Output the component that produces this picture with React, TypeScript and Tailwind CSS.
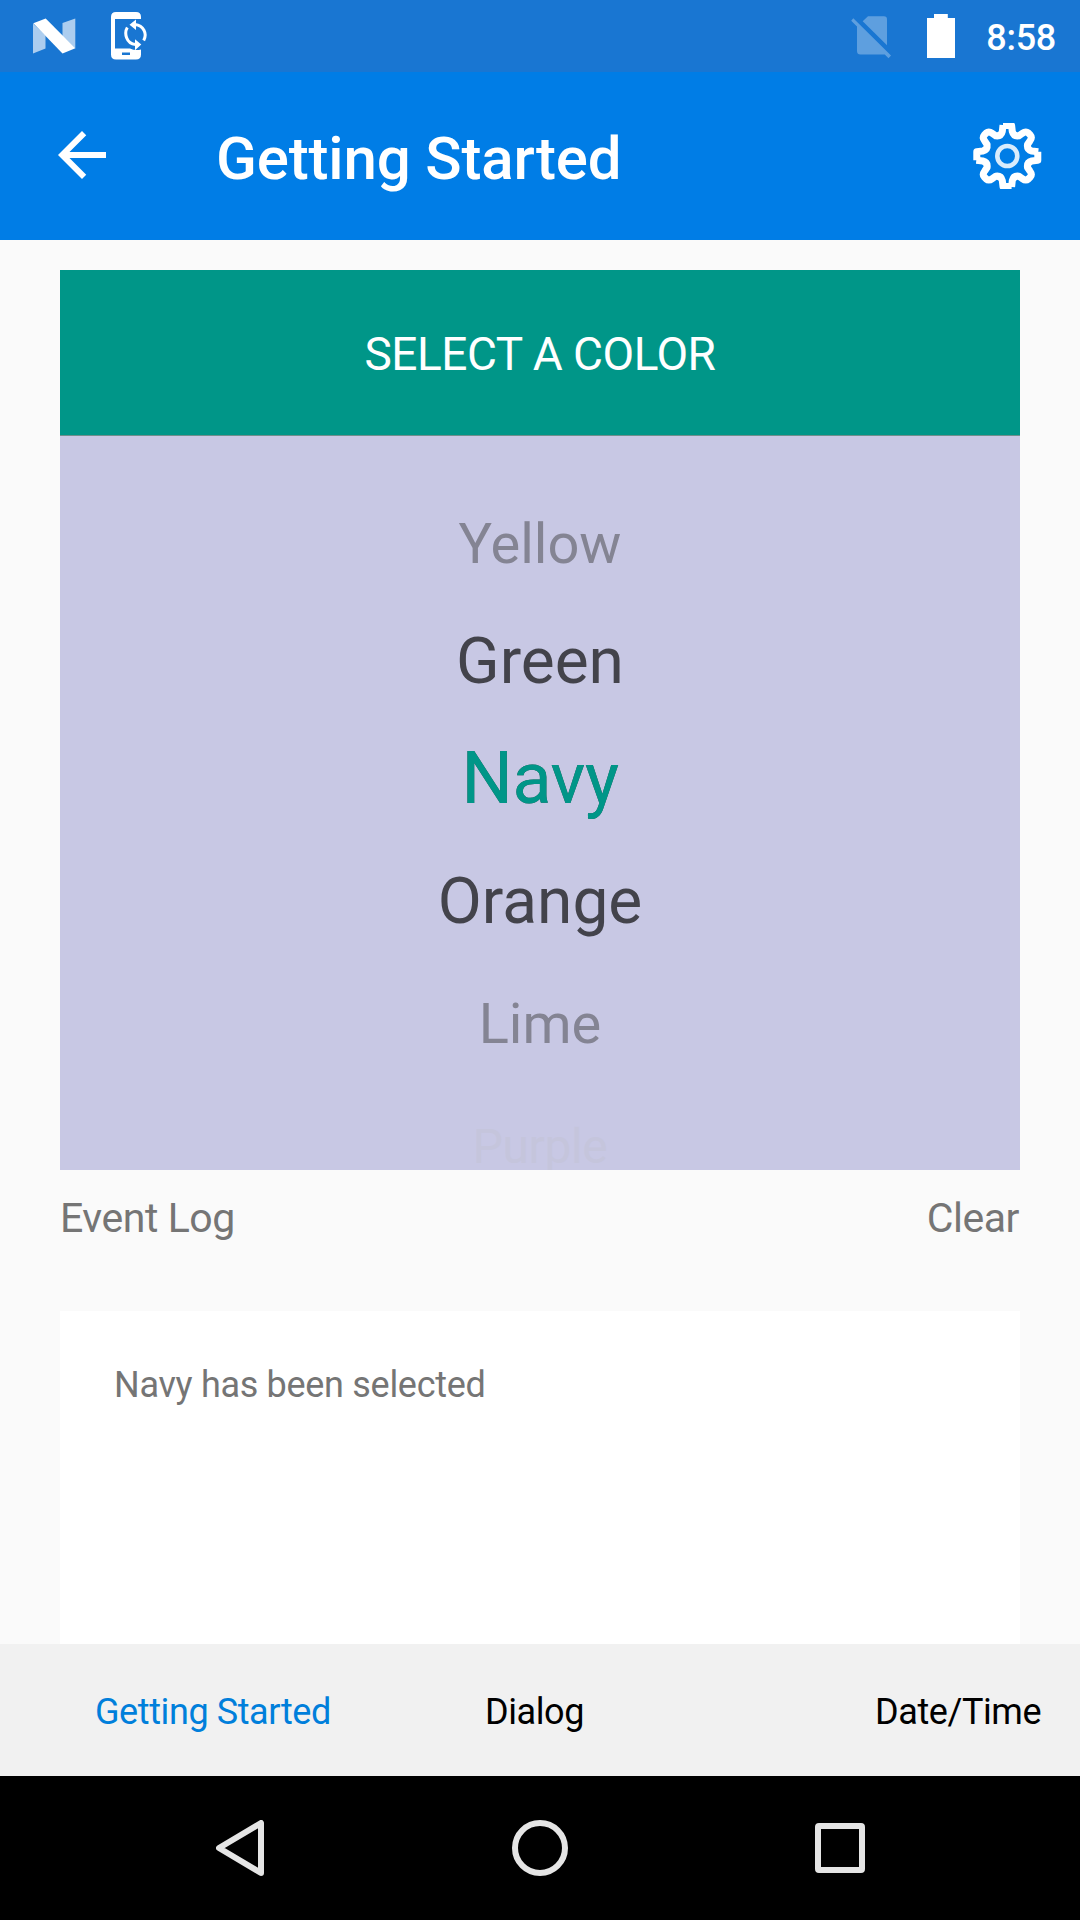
import React from "react";

const GEAR_QUARTER =
  "M-4.3 -30.5H4.3L5 -24.500Q6.200 -19.500 11.500 -20.200L15 -22.600Q18.500 -25.200 21 -23L23 -21Q25.200 -18.500 22.600 -15L20.200 -11.500Q19.500 -6.200 24.500 -5L31 -4.300";

const COLORS = [
  { name: "Yellow", style: "text-[56px] text-[#848493]" },
  { name: "Green", style: "text-[64px] text-[#43434b]" },
  { name: "Navy", style: "text-[72px] tracking-[-0.5px] text-[#009688] [text-shadow:0_0_0_#3c4c4c]" },
  { name: "Orange", style: "text-[64px] text-[#43434b]" },
  { name: "Lime", style: "text-[56px] text-[#848493]" },
  { name: "Purple", style: "text-[48px] tracking-[-0.4px] text-[#c5c5dc]" },
];

function StatusBar() {
  return (
    <div className="flex h-[72px] items-center bg-[#1976d2] pl-[33px] pr-[24px]">
      <svg className="h-[72px] w-[43px]" viewBox="33 0 43 72">
        <path d="M33 23.5V53.5L45.5 48.5V35.5ZM62.5 23L75.3 18.5V48.5L62.5 36Z" fill="#fff" fillOpacity="0.64" />
        <path d="M33.3 23.2L45.7 18.5L75.3 48.3L62.5 53.5Z" fill="#fff" />
      </svg>
      <svg className="ml-[34px] h-[72px] w-[38px]" viewBox="110 0 38 72">
        <path
          d="M116 12H136Q141 12 141 17V19H115V48.5H130Q135 51 141 49.5V54.5Q141 59.5 136 59.5H116Q111 59.5 111 54.5V17Q111 12 116 12ZM122 52.5V55H130V52.5Z"
          fill="#fff"
          fillRule="evenodd"
        />
        <path d="M127.3 27.5C124 33 126 43.5 135.5 44.5M143.7 40.5C147.5 33.5 143.5 25.5 135 24.6" fill="none" stroke="#fff" strokeWidth="3" />
        <path d="M129.5 24.7L136 19.5V30ZM141.3 44.6L135 39.2V50.2Z" fill="#fff" />
      </svg>
      <svg className="ml-auto h-[72px] w-[40px]" viewBox="851 0 40 72">
        <g fill="#fff" fillOpacity="0.3">
          <path d="M868 16.3H884Q887 16.3 887 19.3V45.3L862.7 21.3Z" />
          <path d="M853.3 18.2L891 55.5L888.5 58.2L884.8 54.6H860.5Q857 54.6 857 51V26.5L851.2 20.8Z" />
        </g>
      </svg>
      <svg className="ml-[36px] h-[72px] w-[28px]" viewBox="927 0 28 72">
        <path d="M934 14H947.8V18H955V58H927V18H934Z" fill="#fff" />
      </svg>
      <span className="ml-[31px] pt-[3px] text-[36px] font-medium leading-none tracking-[-0.3px] text-white">8:58</span>
    </div>
  );
}

function Toolbar() {
  return (
    <header className="flex h-[168px] items-center bg-[#007de6] pl-[46px] pr-[38px]">
      <svg className="-mt-[2px] size-[72px]" viewBox="0 0 24 24" fill="#fff">
        <path d="M20 11H7.83l5.59-5.59L12 4l-8 8 8 8 1.41-1.41L7.83 13H20v-2z" />
      </svg>
      <h1 className="ml-[98px] pt-[5px] text-[60px] font-medium leading-none tracking-[-0.16px] text-white">
        Getting Started
      </h1>
      <svg className="ml-auto h-[66px] w-[69px]" viewBox="-34.3 -33 69 66" fill="none" stroke="#fff">
        <g strokeWidth="7" strokeLinejoin="round">
          <path d={GEAR_QUARTER} />
          <path d={GEAR_QUARTER} transform="rotate(90)" />
          <path d={GEAR_QUARTER} transform="rotate(180)" />
          <path d={GEAR_QUARTER} transform="rotate(270)" />
        </g>
        <circle r="10" strokeWidth="4.6" strokeOpacity="0.85" />
      </svg>
    </header>
  );
}

function ColorPicker() {
  return (
    <section className="flex h-[900px] shrink-0 flex-col overflow-hidden bg-[#c8c8e4]">
      <div className="flex h-[166px] shrink-0 items-center justify-center border-b border-[#6f8f8c] bg-[#009688] pt-[2px] text-[46px] leading-none tracking-[-0.5px] text-white">
        SELECT A COLOR
      </div>
      <ul className="pt-[48px] text-center text-[56px] leading-[120px]">
        {COLORS.map((c) => (
          <li key={c.name} className="h-[120px]">
            <span className={`leading-none ${c.style}`}>{c.name}</span>
          </li>
        ))}
      </ul>
    </section>
  );
}

export default function App() {
  return (
    <div className="flex h-[1920px] w-[1080px] flex-col overflow-hidden bg-[#fafafa] font-['Roboto',sans-serif]">
      <StatusBar />
      <Toolbar />
      <main className="flex h-[1404px] flex-col px-[60px] pt-[30px]">
        <ColorPicker />
        <div className="flex h-[141px] justify-between pt-[24px] text-[41px] leading-[48px] tracking-[-0.45px] text-[#757575]">
          <span>Event Log</span>
          <span className="pr-px">Clear</span>
        </div>
        <div className="flex-1 bg-white pl-[54px] pt-[52px] text-[36px] leading-[44px] tracking-[-0.3px] text-[#757575]">
          Navy has been selected
        </div>
      </main>
      <nav className="flex h-[132px] items-center bg-[#f1f1f1] pl-[95px] pt-[4px] text-[36px] leading-none tracking-[-0.4px] text-black">
        <span className="w-[390px] text-[#007fdb]">Getting Started</span>
        <span className="w-[390px]">Dialog</span>
        <span>Date/Time</span>
      </nav>
      <div className="grid h-[144px] grid-cols-3 items-center justify-items-center bg-black px-[90px]">
        <svg className="h-[56px] w-[48px]" viewBox="216 1820 48 56" fill="none" stroke="#e5e5e5" strokeWidth="6" strokeLinejoin="round">
          <path d="M261 1823V1873L219 1848Z" />
        </svg>
        <div className="size-[56px] rounded-full border-[6px] border-[#e5e5e5]" />
        <div className="size-[50px] rounded-[4px] border-[6px] border-[#e5e5e5]" />
      </div>
    </div>
  );
}
